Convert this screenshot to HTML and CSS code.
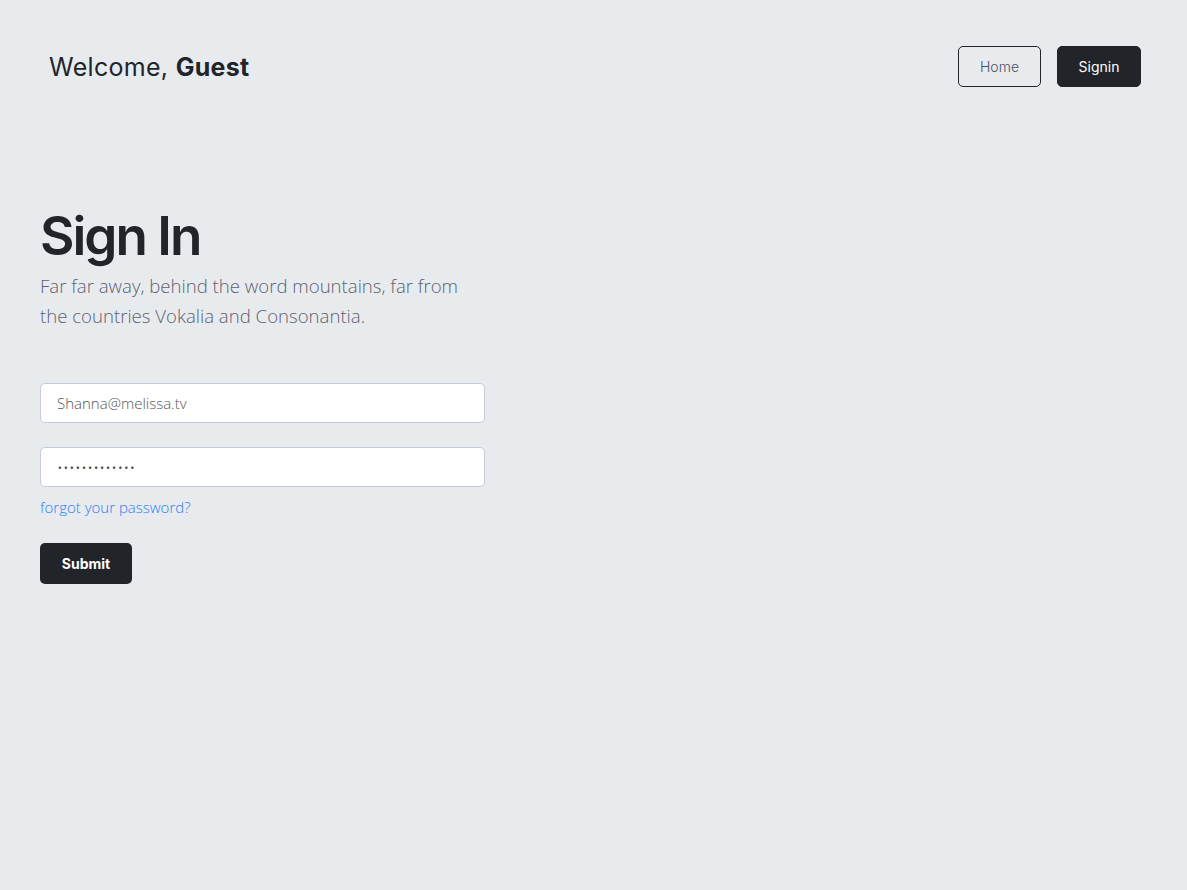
FILE: index.html
```html
<!DOCTYPE html>
<html lang="en">
<head>
<meta charset="utf-8">
<title>Sign In</title>
<link rel="stylesheet" href="styles.css">
</head>
<body>
<header class="topbar">
  <div class="welcome">Welcome, <strong>Guest</strong></div>
  <nav class="nav">
    <a class="btn btn-outline" href="#">Home</a>
    <a class="btn btn-dark" href="#">Signin</a>
  </nav>
</header>
<main class="main">
  <h1 class="title">Sign In</h1>
  <p class="lead">Far far away, behind the word mountains, far from the countries Vokalia and Consonantia.</p>
  <form class="form">
    <input class="field" type="email" value="Shanna@melissa.tv">
    <input class="field field-pass" type="password" value="melissapass12">
    <a class="forgot" href="#">forgot your password?</a>
    <button class="submit" type="button">Submit</button>
  </form>
</main>
</body>
</html>
```
FILE: styles.css
```css
* { box-sizing: border-box; }
html, body { margin: 0; padding: 0; }
body {
  background: #e8ebee;
  color: #212529;
  font-family: "Open Sans", "Liberation Sans", sans-serif;
  min-height: 890px;
}
.topbar {
  display: flex;
  justify-content: space-between;
  align-items: center;
  padding: 46px 46px 0 49px;
}
.welcome {
  font-family: Inter, "Noto Sans", sans-serif;
  font-size: 25px;
  font-weight: 400;
  letter-spacing: 0.3px;
  color: #212529;
}
.welcome strong { font-weight: 700; }
.nav { display: flex; gap: 16px; }
.btn {
  display: flex;
  align-items: center;
  justify-content: center;
  height: 41px;
  border-radius: 5px;
  font-family: Inter, "Noto Sans", sans-serif;
  font-size: 14px;
  text-decoration: none;
  border: 1px solid #212529;
}
.btn-outline { width: 83px; color: #4a4f6a; background: transparent; font-weight: 300; }
.btn-dark { width: 84px; color: #fff; background: #212529; }
.main {
  padding: 114px 0 0 40px;
}
.title {
  margin: 0;
  font-family: Inter, "Noto Sans", sans-serif;
  font-size: 53px;
  font-weight: 600;
  letter-spacing: -2px;
  line-height: 70px;
  color: #212529;
}
.lead {
  margin: 0;
  width: 440px;
  font-size: 18.6px;
  font-weight: 300;
  line-height: 30px;
  color: #5e6170;
}
.form {
  display: flex;
  flex-direction: column;
  align-items: flex-start;
  margin-top: 52px;
}
.field {
  width: 445px;
  height: 40px;
  border: 1px solid #c3ccd8;
  border-radius: 5px;
  background: #fff;
  padding: 0 16px;
  font-family: "Open Sans", sans-serif;
  font-size: 15px;
  font-weight: 300;
  color: #555;
  outline: none;
}
.field-pass {
  margin-top: 24px;
  letter-spacing: 0.4px;
  color: #444;
}
.forgot {
  margin-top: 9px;
  font-size: 15px;
  font-weight: 300;
  color: #2d7cf6;
  text-decoration: none;
  line-height: 22px;
}
.submit {
  margin-top: 25px;
  width: 92px;
  height: 41px;
  border: none;
  border-radius: 5px;
  background: #212529;
  color: #fff;
  font-family: Inter, "Noto Sans", sans-serif;
  font-size: 14px;
  font-weight: 700;
}
```
